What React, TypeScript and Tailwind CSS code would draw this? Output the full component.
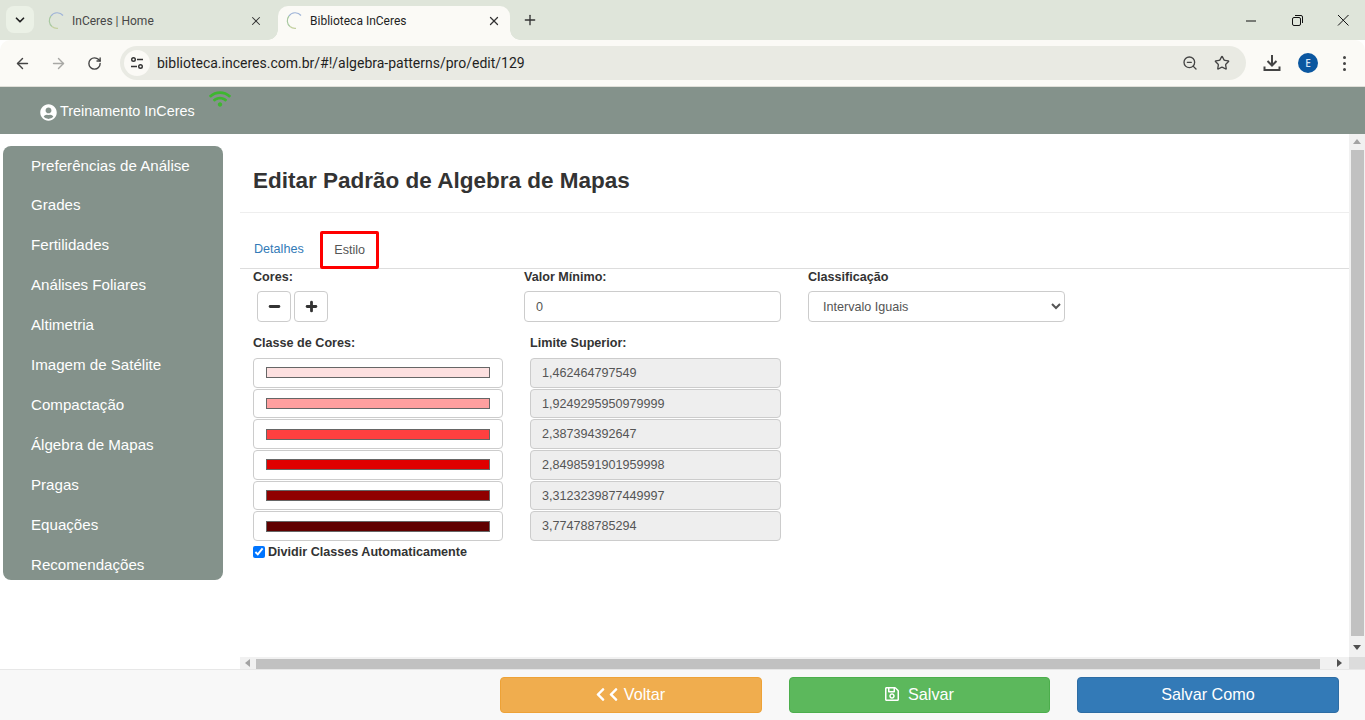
import { ArrowLeft, ArrowRight, ChevronDown, Minus, Plus, RotateCw, Star, X, ZoomOut } from 'lucide-react';
import { FaChevronLeft, FaRegSave, FaUserCircle, FaWifi } from 'react-icons/fa';

const menu = [
    'Preferências de Análise',
    'Grades',
    'Fertilidades',
    'Análises Foliares',
    'Altimetria',
    'Imagem de Satélite',
    'Compactação',
    'Álgebra de Mapas',
    'Pragas',
    'Equações',
    'Recomendações',
];

const classes = [
    { color: 'bg-[#fde0e0]', limit: '1,462464797549' },
    { color: 'bg-[#ff9f9f]', limit: '1,9249295950979999' },
    { color: 'bg-[#ff4040]', limit: '2,387394392647' },
    { color: 'bg-[#e00000]', limit: '2,8498591901959998' },
    { color: 'bg-[#900000]', limit: '3,3123239877449997' },
    { color: 'bg-[#600000]', limit: '3,774788785294' },
];

function Favicon() {
    return (
        <svg width="18" height="18" viewBox="0 0 18 18" fill="none" className="shrink-0">
            <path d="M15 3.500A7.500 7.500 0 0 0 3 4" stroke="#9fb4d8" strokeWidth="1.200" />
            <path d="M3 4A7.500 7.500 0 0 0 4 14.500" stroke="#a8c8a0" strokeWidth="1.200" />
            <path d="M4 14.500A7.500 7.500 0 0 0 10 16.400" stroke="#c4d0a0" strokeWidth="1.200" />
        </svg>
    );
}

function Tab({ title, active }: { title: string; active?: boolean }) {
    return (
        <div
            className={`relative flex h-[34px] w-[232px] items-center rounded-t-[10px] pb-[5px] pl-[8px] pr-[9px] ${
                active ? 'bg-[#fbfaf6] text-[#1f1f1f]' : 'text-[#474747]'
            }`}
        >
            {/* Flared corners of the active tab */}
            {active && (
                <>
                    <span className="absolute bottom-0 -left-[10px] h-[10px] w-[10px] bg-[radial-gradient(circle_at_0_0,transparent_9.500px,#fbfaf6_10px)]" />
                    <span className="absolute bottom-0 -right-[10px] h-[10px] w-[10px] bg-[radial-gradient(circle_at_100%_0,transparent_9.500px,#fbfaf6_10px)]" />
                </>
            )}
            <Favicon />
            <span className="ml-[6px] flex-1 font-['Roboto',sans-serif] text-[12px]">{title}</span>
            <X size={14} strokeWidth={active ? 2.200 : 1.800} className="text-[#333]" />
        </div>
    );
}

function BrowserChrome() {
    return (
        <div className="shrink-0">
            <div className="flex h-[40px] items-end gap-[6px] bg-[#dfe5da] pl-[6px]">
                <div className="mb-[7px] flex h-[27px] w-[28px] items-center justify-center rounded-[8px] bg-[#ebf1e6]">
                    <ChevronDown size={14} strokeWidth={3} className="text-[#222]" />
                </div>
                <Tab title="InCeres | Home" />
                <Tab title="Biblioteca InCeres" active />
                <div className="mb-[6px] flex h-[28px] w-[28px] items-center justify-center">
                    <Plus size={16} strokeWidth={2} className="text-[#333]" />
                </div>
                <div className="mb-[6px] ml-auto flex h-[28px] items-center gap-[31px] pr-[14px] text-[#111]">
                    <svg width="15" height="15" viewBox="0 0 15 15"><path d="M2 8h10" stroke="currentColor" strokeWidth="1" /></svg>
                    <svg width="15" height="15" viewBox="0 0 15 15" fill="none" stroke="currentColor">
                        <rect x="2.500" y="4.500" width="8" height="8" rx="1.500" />
                        <path d="M5 2.500h6a1.500 1.500 0 0 1 1.500 1.500v6" />
                    </svg>
                    <svg width="15" height="15" viewBox="0 0 15 15" stroke="currentColor"><path d="M2 2l10.500 10.500M12.500 2L2 12.500" /></svg>
                </div>
            </div>
            <div className="flex h-[47px] items-center rounded-t-[10px] border-b border-[#dfdfd8] bg-[#fbfaf6] pl-[14px] pr-[19px]">
                <ArrowLeft size={17} strokeWidth={2} className="text-[#444]" />
                <ArrowRight size={17} strokeWidth={2} className="ml-[19px] text-[#a8a8a5]" />
                <RotateCw size={15} strokeWidth={2.200} className="ml-[20px] text-[#444]" />
                <div className="ml-[18px] flex h-[34px] flex-1 items-center rounded-full bg-[#e9eae3] pl-[4px] pr-[16px]">
                    <div className="flex h-[26px] w-[26px] items-center justify-center rounded-full bg-[#fbfaf6]">
                        <svg width="14" height="14" viewBox="0 0 14 14" fill="none" stroke="#333" strokeWidth="1.400">
                            <circle cx="3.500" cy="3.500" r="1.800" />
                            <path d="M7 3.500h6M1 10.500h6" />
                            <circle cx="10.500" cy="10.500" r="1.800" />
                        </svg>
                    </div>
                    <span className="ml-[7px] flex-1 font-['Roboto',sans-serif] text-[14px] text-[#1f1f1f]">
                        biblioteca.inceres.com.br/#!/algebra-patterns/pro/edit/129
                    </span>
                    <ZoomOut size={16} strokeWidth={2} className="text-[#444]" />
                    <Star size={16} strokeWidth={2} className="ml-[16px] text-[#444]" />
                </div>
                <svg width="18" height="18" viewBox="0 0 18 18" fill="none" stroke="#444" strokeWidth="2" className="ml-[17px]">
                    <path d="M9 1v10M4.500 7L9 11.500 13.500 7M1.500 12.500V16h15v-3.500" />
                </svg>
                <div className="ml-[17px] flex h-[20px] w-[20px] items-center justify-center rounded-full bg-[#0b57a0] font-['Open_Sans',sans-serif] text-[10px] font-semibold text-[#d4e3f7]">
                    E
                </div>
                <div className="ml-[25px] flex flex-col gap-[3px]">
                    <span className="h-[3px] w-[3px] rounded-full bg-[#444]" />
                    <span className="h-[3px] w-[3px] rounded-full bg-[#444]" />
                    <span className="h-[3px] w-[3px] rounded-full bg-[#444]" />
                </div>
            </div>
        </div>
    );
}

function Arrow({ dir }: { dir: 'up' | 'down' | 'left' | 'right' }) {
    const points = {
        up: '4,1 8,6 0,6',
        down: '0,1 8,1 4,6',
        left: '6,0 6,8 1,4',
        right: '1,0 6,4 1,8',
    };
    return (
        <svg width="8" height="8" viewBox="0 0 8 8">
            <polygon points={points[dir]} fill="currentColor" />
        </svg>
    );
}

function StyleForm() {
    return (
        <div className="pl-[13px] text-[12.600px] text-[#333]">
            <div className="flex">
                <div className="w-[271px]">
                    <div className="font-bold leading-[16px]">Cores:</div>
                    <div className="mt-[6px] flex gap-[3px] pl-[4px]">
                        <button className="flex h-[31px] w-[34px] items-center justify-center rounded-[4px] border border-[#ccc]">
                            <Minus size={15} strokeWidth={4.500} />
                        </button>
                        <button className="flex h-[31px] w-[34px] items-center justify-center rounded-[4px] border border-[#ccc]">
                            <Plus size={15} strokeWidth={4.500} />
                        </button>
                    </div>
                </div>
                <div className="w-[284px]">
                    <div className="font-bold leading-[16px]">Valor Mínimo:</div>
                    <input
                        readOnly
                        value="0"
                        className="mt-[6px] h-[31px] w-[257px] rounded-[4px] border border-[#ccc] px-[11px] text-[#555] outline-none"
                    />
                </div>
                <div>
                    <div className="font-bold leading-[16px]">Classificação</div>
                    <select className="mt-[6px] h-[31px] w-[257px] rounded-[4px] border border-[#ccc] bg-white px-[10px] text-[#555] outline-none">
                        <option>Intervalo Iguais</option>
                    </select>
                </div>
            </div>
            <div className="mt-[13px] flex">
                <div className="w-[277px]">
                    <div className="font-bold leading-[16px]">Classe de Cores:</div>
                    <div className="mt-[7px] flex flex-col gap-[1px]">
                        {classes.map((item) => (
                            <div
                                key={item.limit}
                                className="flex h-[29.700px] w-[250px] items-center justify-center rounded-[4px] border border-[#ccc] bg-white"
                            >
                                <div className={`h-[11px] w-[224px] border border-[#666] ${item.color}`} />
                            </div>
                        ))}
                    </div>
                </div>
                <div>
                    <div className="font-bold leading-[16px]">Limite Superior:</div>
                    <div className="mt-[7px] flex flex-col gap-[1px]">
                        {classes.map((item) => (
                            <input
                                key={item.limit}
                                readOnly
                                value={item.limit}
                                className="h-[29.700px] w-[251px] rounded-[4px] border border-[#ccc] bg-[#eee] px-[11px] text-[#555] outline-none"
                            />
                        ))}
                    </div>
                </div>
            </div>
            <label className="mt-[3px] flex items-center font-bold leading-[16px]">
                <input type="checkbox" defaultChecked className="m-0 h-[12px] w-[12px]" />
                <span className="ml-[3px]">Dividir Classes Automaticamente</span>
            </label>
        </div>
    );
}

export default function App() {
    return (
        <div className="flex h-[720px] flex-col overflow-hidden bg-white font-['Liberation_Sans',Arial,sans-serif]">
            <BrowserChrome />

            <div className="flex h-[47px] shrink-0 bg-[#84928b] pl-[40px] text-white">
                <div className="flex items-center gap-[3px] pt-[3px] text-[14.400px]">
                    <FaUserCircle size={17} />
                    <span>Treinamento InCeres</span>
                </div>
                <FaWifi size={22} className="ml-[14px] mt-[1px] text-[#3eb72f]" />
            </div>

            <div className="flex min-h-0 flex-1">
                <div className="w-[240px] shrink-0 pl-[3px] pt-[12px]">
                    <div className="h-[434px] w-[220px] overflow-hidden rounded-[8px] bg-[#84928b] pl-[28px] text-[15.120px] text-white">
                        {menu.map((item) => (
                            <div key={item} className="flex h-[39.900px] items-center">
                                {item}
                            </div>
                        ))}
                    </div>
                </div>
                <div className="flex min-w-0 flex-1 flex-col">
                    <div className="flex min-h-0 flex-1">
                        <div className="min-w-0 flex-1">
                            <div className="h-[79px] border-b border-[#eee] pl-[13px] pt-[33px]">
                                <h3 className="text-[22.500px] font-bold leading-[28px] text-[#333]">
                                    Editar Padrão de Algebra de Mapas
                                </h3>
                            </div>
                            <div className="flex h-[56px] items-end border-b border-[#ddd] pl-[14px] text-[12.600px]">
                                <div className="mb-[9px] text-[#337ab7]">Detalhes</div>
                                <div className="-mb-px ml-[16px] flex h-[38px] w-[59px] items-center justify-center rounded-[2px] border-[3px] border-[#f00] pl-[1px] text-[#555]">
                                    Estilo
                                </div>
                            </div>
                            <StyleForm />
                        </div>
                        <div className="flex w-[16px] shrink-0 flex-col items-center bg-[#f1f1f1] text-[#a3a3a3]">
                            <div className="flex h-[16px] items-center justify-center">
                                <Arrow dir="up" />
                            </div>
                            <div className="h-[486px] w-[13px] bg-[#c1c1c1]" />
                            <div className="flex flex-1 items-end justify-center pb-[5px] text-[#505050]">
                                <Arrow dir="down" />
                            </div>
                        </div>
                    </div>
                    <div className="flex h-[12px] shrink-0 items-center bg-[#f1f1f1] text-[#a3a3a3]">
                        <div className="flex w-[16px] justify-center">
                            <Arrow dir="left" />
                        </div>
                        <div className="h-[10px] w-[1064px] self-end bg-[#c1c1c1]" />
                        <div className="flex flex-1 justify-end pr-[5px] text-[#505050]">
                            <Arrow dir="right" />
                        </div>
                        <div className="h-[12px] w-[16px] bg-[#dcdcdc]" />
                    </div>
                </div>
            </div>

            <div className="flex h-[51px] shrink-0 items-center justify-end gap-[27px] border-t border-[#e7e7e7] bg-[#f8f8f8] pr-[26px] text-[16.200px] text-white">
                <button className="flex h-[36px] w-[262px] items-center justify-center rounded-[4px] border border-[#eea236] bg-[#f0ad4e] pb-[2px] pr-[4px]">
                    <FaChevronLeft size={15} />
                    <FaChevronLeft size={15} className="-ml-[2px]" />
                    <span className="ml-[3px]">Voltar</span>
                </button>
                <button className="flex h-[36px] w-[261px] items-center justify-center rounded-[4px] border border-[#4cae4c] bg-[#5cb85c] pb-[2px] pr-[1px]">
                    <FaRegSave size={16} />
                    <span className="ml-[8px]">Salvar</span>
                </button>
                <button className="flex h-[36px] w-[262px] items-center justify-center rounded-[4px] border border-[#2e6da4] bg-[#337ab7] pb-[2px]">
                    Salvar Como
                </button>
            </div>
        </div>
    );
}
